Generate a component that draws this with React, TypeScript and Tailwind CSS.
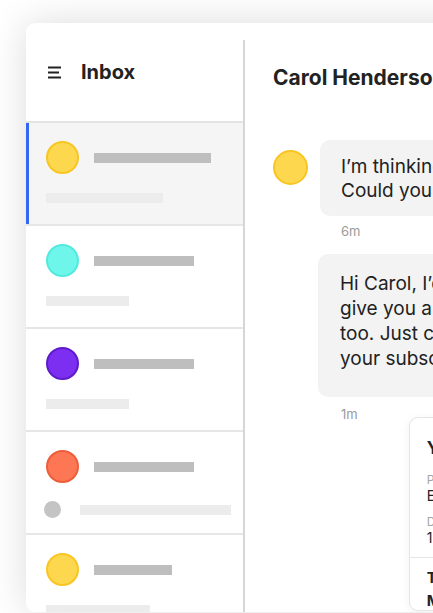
const avatarColors = {
  yellow: 'bg-[#fdd84f] border-[#f8c523]',
  cyan: 'bg-[#6ff6ea] border-[#52eadf]',
  purple: 'bg-[#7c2ff0] border-[#5e1bcc]',
  orange: 'bg-[#fd7755] border-[#ee5d3a]',
};

type Thread = {
  color: keyof typeof avatarColors;
  top: string;
  bottom: string;
  active?: boolean;
  unread?: boolean;
};

const threads: Thread[] = [
  { color: 'yellow', top: 'w-[117px]', bottom: 'w-[117px]', active: true },
  { color: 'cyan', top: 'w-[100px]', bottom: 'w-[83px]' },
  { color: 'purple', top: 'w-[100px]', bottom: 'w-[83px]' },
  { color: 'orange', top: 'w-[100px]', bottom: 'w-[151px]', unread: true },
  { color: 'yellow', top: 'w-[78px]', bottom: 'w-[104px]' },
];

const Avatar = ({ color, size = 'w-[33px] h-[33px]' }: { color: keyof typeof avatarColors; size?: string }) => (
  <div className={`${size} shrink-0 rounded-full border-2 ${avatarColors[color]}`} />
);

const ThreadItem = ({ t }: { t: Thread }) => (
  <div
    className={`relative h-[103px] shrink-0 border-b-2 border-[#e6e6e6] px-[20px] pt-[18px] ${
      t.active ? 'bg-[#f5f5f5]' : 'bg-white'
    }`}
  >
    {t.active && <div className="absolute left-0 top-0 bottom-0 w-[3px] bg-[#3568f2]" />}
    <div className="flex items-center gap-[15px]">
      <Avatar color={t.color} />
      <div className={`h-[10px] shrink-0 bg-[#bebebe] ${t.top}`} />
    </div>
    {t.unread ? (
      <div className="mt-[18px] -ml-[2px] flex items-center gap-[19px]">
        <div className="h-[17px] w-[17px] shrink-0 rounded-full bg-[#c4c4c4]" />
        <div className={`h-[10px] shrink-0 bg-[#ececec] ${t.bottom}`} />
      </div>
    ) : (
      <div className={`mt-[19px] h-[10px] bg-[#ececec] ${t.bottom}`} />
    )}
  </div>
);

export default function App() {
  return (
    <div
      className="h-[613px] w-[433px] overflow-hidden bg-white pl-[26px] pt-[23px]"
      style={{ fontFamily: 'Inter, "Noto Sans", sans-serif' }}
    >
      <div className="flex h-[589px] w-[640px] overflow-hidden rounded-[9px] bg-white shadow-[0_0_38px_rgba(0,0,0,0.14)]">
        {/* sidebar */}
        <div className="flex w-[217px] shrink-0 flex-col">
          <div className="flex h-[100px] shrink-0 items-center gap-[19px] border-b-2 border-[#e3e3e3] pl-[21px]">
            <svg width="15" height="13" viewBox="0 0 15 13" className="text-[#222]">
              <path d="M1 1.5h13M1 6.5h11M1 11.5h13" stroke="currentColor" strokeWidth="2" fill="none" />
            </svg>
            <span className="text-[20px] font-bold leading-none text-[#222]">Inbox</span>
          </div>
          {threads.map((t, i) => (
            <ThreadItem key={i} t={t} />
          ))}
        </div>
        <div className="mt-[17px] w-[2px] shrink-0 bg-[#d6d6d6]" />

        {/* conversation */}
        <div className="flex flex-1 flex-col pl-[28px] pt-[41px]">
          <h1 className="whitespace-nowrap text-[21px] font-bold leading-[28px] text-[#222]">Carol Henderson</h1>

          <div className="mt-[48px] flex gap-[12px]">
            <Avatar color="yellow" size="w-[35px] h-[35px] mt-[10px]" />
            <div>
              <div className="whitespace-nowrap rounded-[10px] bg-[#f3f3f3] px-[21px] pt-[15px] pb-[13px] text-[19px] leading-[24px] text-[#222]">
                I’m thinking about upgrading to the annual plan.
                <br />
                Could you tell me how much it would cost?
              </div>
              <div className="mt-[6px] pl-[21px] text-[13px] text-[#9a9a9a]">6m</div>
            </div>
          </div>

          <div className="mt-[12px] ml-[45px]">
            <div className="whitespace-nowrap rounded-[10px] bg-[#f3f3f3] px-[22px] pt-[17px] pb-[26px] text-[19px] leading-[25px] text-[#222]">
              Hi Carol, I’d be happy to help you with that! I can
              <br />
              give you a 20% discount on the annual plan
              <br />
              too. Just confirm the details below and I’ll update
              <br />
              your subscription right away.
            </div>
            <div className="mt-[8px] flex items-start">
              <div className="pl-[23px] text-[13px] text-[#9a9a9a]">1m</div>
              <div className="ml-[51px] mt-[12px] w-[260px] rounded-[9px] border border-[#e6e6e6] bg-white shadow-[0_2px_10px_rgba(0,0,0,0.06)]">
                <div className="px-[17px] pt-[20px] pb-[11px]">
                  <div className="text-[17px] font-bold leading-[20px] text-[#222]">Your subscription</div>
                  <div className="mt-[14px] text-[12px] leading-[16px] text-[#a5a5a5]">Plan</div>
                  <div className="text-[14px] leading-[16px] text-[#222]">Essentials Annual</div>
                  <div className="mt-[10px] text-[12px] leading-[16px] text-[#a5a5a5]">Date</div>
                  <div className="text-[14px] leading-[16px] text-[#222]">1 May 2024</div>
                </div>
                <div className="border-t border-[#e6e6e6] px-[17px] pt-[11px]">
                  <div className="text-[15px] font-bold leading-[18px] text-[#222]">Total</div>
                  <div className="mt-[5px] text-[15px] font-bold leading-[18px] text-[#222]">Monthly</div>
                </div>
              </div>
            </div>
          </div>
        </div>
      </div>
    </div>
  );
}
